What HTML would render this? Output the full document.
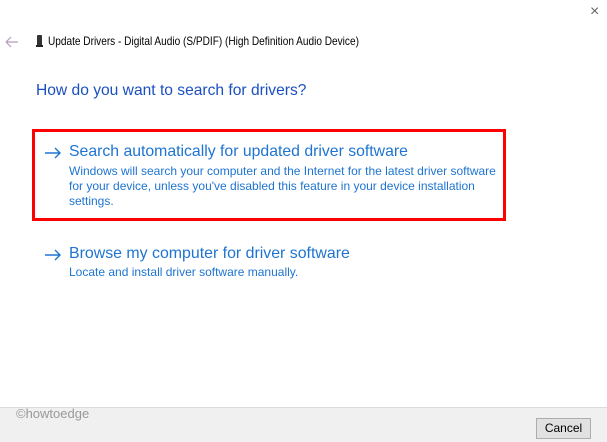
<!DOCTYPE html>
<html><head><style>
body{margin:0;width:607px;height:441px;position:relative;background:#fff;font-family:"Liberation Sans",sans-serif;overflow:hidden}
.a{position:absolute;white-space:nowrap}
</style></head><body>
<div class="a" style="left:590px;top:3px;font-size:16px;color:#666">×</div>
<svg class="a" style="left:5px;top:36px" width="14" height="12"><path d="M1 6H13M1 6L6 1M1 6L6 11" stroke="#b39cbf" stroke-width="1.2" fill="none"/></svg>
<div class="a" style="left:37px;top:35px;width:5px;height:11px;background:#333;border-radius:1px"></div>
<div class="a" style="left:36px;top:45px;width:7px;height:2px;background:#222"></div>
<div class="a" style="left:48px;top:34px;font-size:12px;color:#000;transform:scaleX(0.84);transform-origin:0 0">Update Drivers - Digital Audio (S/PDIF) (High Definition Audio Device)</div>
<div class="a" style="left:36px;top:82px;font-size:15.6px;color:#1a4fc0">How do you want to search for drivers?</div>
<div class="a" style="left:32px;top:129px;width:468px;height:86px;border:3px solid #f00"></div>
<svg class="a" style="left:44px;top:147px" width="18" height="12"><path d="M1 6H16M11 1L16 6L11 11" stroke="#1e74d0" stroke-width="1.4" fill="none"/></svg>
<div class="a" style="left:69px;top:143px;font-size:15.8px;color:#1e74d0">Search automatically for updated driver software</div>
<div class="a" style="left:69px;top:164px;font-size:12px;line-height:15px;color:#1e74d0">Windows will search your computer and the Internet for the latest driver software<br>for your device, unless you've disabled this feature in your device installation<br>settings.</div>
<svg class="a" style="left:44px;top:249px" width="18" height="12"><path d="M1 6H16M11 1L16 6L11 11" stroke="#1e74d0" stroke-width="1.4" fill="none"/></svg>
<div class="a" style="left:69px;top:245px;font-size:15.9px;color:#1e74d0">Browse my computer for driver software</div>
<div class="a" style="left:69px;top:265px;font-size:12px;color:#1e74d0">Locate and install driver software manually.</div>
<div class="a" style="left:0;top:407px;width:607px;height:34px;background:#f0f0f0;border-top:1px solid #dcdcdc"></div>
<div class="a" style="left:16px;top:406px;font-size:13px;color:#999">©howtoedge</div>
<div class="a" style="left:536px;top:418px;width:53px;height:19px;border:1px solid #adadad;background:#e1e1e1;font-size:12px;text-align:center;line-height:19px;color:#000">Cancel</div>
</body></html>
